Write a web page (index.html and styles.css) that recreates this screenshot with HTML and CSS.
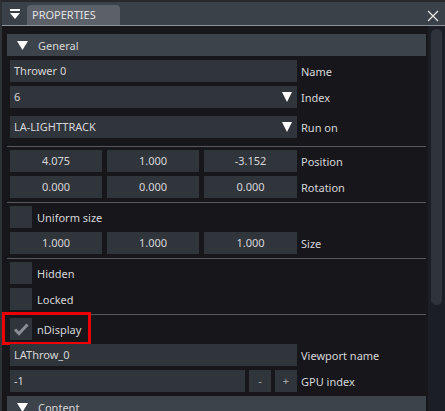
FILE: index.html
```html
<!DOCTYPE html>
<html>
<head>
<meta charset="utf-8">
<link rel="stylesheet" href="styles.css">
</head>
<body>
<div class="window">
  <div class="titlebar">
    <div class="menu-icon">
      <svg width="11" height="11" viewBox="0 0 11 11"><rect x="0" y="0" width="10" height="2" fill="#fff"/><polygon points="0,4 10,4 5,10" fill="#fff"/></svg>
    </div>
    <div class="tab">PROPERTIES</div>
    <div class="spacer"></div>
    <div class="close">
      <svg width="12" height="12" viewBox="0 0 12 12"><path d="M1 1 L11 11 M11 1 L1 11" stroke="#e6e6e6" stroke-width="1.3"/></svg>
    </div>
  </div>
  <div class="body">
    <div class="content">
      <div class="header">
        <svg class="tri" width="11" height="9" viewBox="0 0 11 9"><polygon points="0,0 11,0 5.5,9" fill="#fff"/></svg>
        <span>General</span>
      </div>
      <div class="section">
        <div class="row">
          <div class="field text">Thrower 0</div>
          <div class="label">Name</div>
        </div>
        <div class="row">
          <div class="field text select">6<svg class="dd" width="10" height="10" viewBox="0 0 10 10"><polygon points="0,0 10,0 5,10" fill="#fff"/></svg></div>
          <div class="label">Index</div>
        </div>
        <div class="row spaced">
          <div class="field text select">LA-LIGHTTRACK<svg class="dd" width="10" height="10" viewBox="0 0 10 10"><polygon points="0,0 10,0 5,10" fill="#fff"/></svg></div>
          <div class="label">Run on</div>
        </div>
        <div class="sep"></div>
        <div class="row">
          <div class="triple"><div class="field num">4.075</div><div class="field num">1.000</div><div class="field num">-3.152</div></div>
          <div class="label">Position</div>
        </div>
        <div class="row">
          <div class="triple"><div class="field num">0.000</div><div class="field num">0.000</div><div class="field num">0.000</div></div>
          <div class="label">Rotation</div>
        </div>
        <div class="sep"></div>
        <div class="row">
          <div class="check"></div>
          <div class="cblabel">Uniform size</div>
        </div>
        <div class="row">
          <div class="triple"><div class="field num">1.000</div><div class="field num">1.000</div><div class="field num">1.000</div></div>
          <div class="label">Size</div>
        </div>
        <div class="sep"></div>
        <div class="row">
          <div class="check"></div>
          <div class="cblabel">Hidden</div>
        </div>
        <div class="row">
          <div class="check"></div>
          <div class="cblabel">Locked</div>
        </div>
        <div class="sep"></div>
        <div class="row marked">
          <div class="check"><svg width="22" height="22" viewBox="0 0 22 22"><path d="M5 11.5 L9 15.5 L17.5 6.5" fill="none" stroke="#8a8d93" stroke-width="3"/></svg></div>
          <div class="cblabel">nDisplay</div>
          <div class="redbox"></div>
        </div>
        <div class="row">
          <div class="field text">LAThrow_0</div>
          <div class="label">Viewport name</div>
        </div>
        <div class="row">
          <div class="gpu">
            <div class="field text grow">-1</div>
            <div class="field btn">-</div>
            <div class="field btn">+</div>
          </div>
          <div class="label">GPU index</div>
        </div>
      </div>
      <div class="header">
        <svg class="tri" width="11" height="9" viewBox="0 0 11 9"><polygon points="0,0 11,0 5.5,9" fill="#fff"/></svg>
        <span>Content</span>
      </div>
    </div>
    <div class="scrollbar"><div class="thumb"></div></div>
  </div>
</div>
</body>
</html>
```
FILE: styles.css
```css
html, body {
  margin: 0;
  padding: 0;
  background: #16161b;
  overflow: hidden;
}
.window {
  width: 445px;
  height: 411px;
  box-sizing: border-box;
  border-left: 2px solid #2f3237;
  border-top: 2px solid #26282d;
  background: #16161b;
  font-family: "Noto Sans", "Open Sans", sans-serif;
  font-size: 11px;
  color: #d6d6d8;
  overflow: hidden;
}
.titlebar {
  height: 23px;
  background: #3b4149;
  border-bottom: 1px solid #8d9299;
  display: flex;
  align-items: flex-end;
}
.menu-icon {
  width: 25px;
  align-self: stretch;
  display: flex;
  align-items: flex-start;
  padding-top: 7px;
  padding-left: 8px;
  box-sizing: border-box;
}
.menu-icon svg { display: block; }
.tab {
  width: 93px;
  height: 20px;
  box-sizing: border-box;
  background: #5b6069;
  border-radius: 4px 4px 0 0;
  padding-left: 5px;
  line-height: 20px;
  color: #e2e2e4;
  font-size: 11px;
}
.spacer { flex: 1; }
.close {
  align-self: stretch;
  width: 18px;
  padding-top: 8px;
  padding-right: 6px;
  box-sizing: border-box;
}
.close svg { display: block; }
.body {
  display: flex;
  height: 386px;
}
.content {
  width: 426px;
  box-sizing: border-box;
  padding: 8px 0 0 5px;
}
.header {
  width: 419px;
  height: 22px;
  background: #3c434b;
  display: flex;
  align-items: center;
  font-size: 11px;
  color: #d6d6d8;
}
.header .tri {
  margin-left: 10px;
  margin-right: 10px;
}
.section {
  display: flex;
  flex-direction: column;
  gap: 4px;
  padding: 4px 0 4px 3px;
}
.row {
  position: relative;
  display: flex;
  align-items: center;
  height: 22px;
}
.row.spaced { margin-top: 4px; margin-bottom: 4px; }
.field {
  height: 22px;
  box-sizing: border-box;
  background: #30343b;
  line-height: 22px;
  color: #d6d6d8;
}
.field.text {
  width: 287px;
  padding-left: 4px;
}
.select {
  position: relative;
  display: flex;
  align-items: center;
}
.select .dd {
  margin-left: auto;
  margin-right: 5px;
}
.triple {
  width: 287px;
  display: grid;
  grid-template-columns: 92px 92px 93px;
  gap: 5px;
}
.field.num { text-align: center; }
.label {
  margin-left: 4px;
}
.sep {
  height: 1px;
  background: #58595f;
  margin-left: -3px;
  width: 419px;
  margin-bottom: -1px;
}
.check {
  width: 22px;
  height: 22px;
  background: #30343b;
}
.check svg { display: block; }
.cblabel { margin-left: 5px; }
.redbox {
  position: absolute;
  left: -8px;
  top: -6px;
  width: 89px;
  height: 33px;
  box-sizing: border-box;
  border: 3px solid #ee0000;
}
.gpu {
  width: 287px;
  display: flex;
  gap: 4px;
}
.field.grow { flex: 1; width: auto; }
.field.btn {
  width: 22px;
  text-align: center;
  color: #a8a8ac;
}
.scrollbar {
  width: 17px;
  background: #1c1e25;
  padding: 3px 3px 0 3px;
  box-sizing: border-box;
}
.thumb {
  width: 11px;
  height: 276px;
  background: #2f343c;
  border-radius: 6px;
}
```
